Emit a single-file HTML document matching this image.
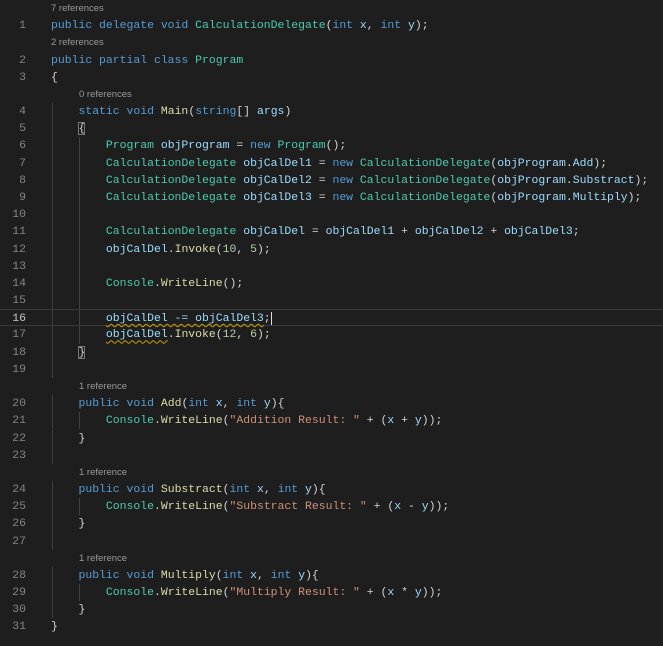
<!DOCTYPE html><html><head><style>
body{margin:0;background:#1e1e1e;width:663px;height:646px;overflow:hidden;position:relative}
.r{position:absolute;left:0;width:663px;height:17.18px;line-height:17.18px;white-space:pre;font-family:"Liberation Mono",monospace;font-size:11.45px;color:#d4d4d4}
.n{position:absolute;right:637px;color:#858585;text-align:right}
.c{position:absolute;left:51px}
.ref{font-family:"Liberation Sans",sans-serif;font-size:9.5px;color:#999}
.g{position:absolute;top:0;bottom:0;width:1px;background:#404040}
.k{color:#569cd6}.t{color:#4ec9b0}.m{color:#dcdcaa}.v{color:#9cdcfe}.s{color:#ce9178}.nu{color:#b5cea8}
.w{text-decoration:underline wavy #c9a000;text-decoration-thickness:1px;text-underline-offset:2px}
.cur{border-top:1px solid #3a3a3a;border-bottom:1px solid #3a3a3a;box-sizing:border-box}
.br{outline:1px solid #777;outline-offset:-1px}
</style></head><body>
<div class="r" style="top:0"><span class="c ref">7 references</span></div>
<div class="r" style="top:17.18px"><span class="n">1</span><span class="c"><span class="k">public delegate void</span> <span class="t">CalculationDelegate</span>(<span class="k">int</span> <span class="v">x</span>, <span class="k">int</span> <span class="v">y</span>);</span></div>
<div class="r" style="top:34.36px"><span class="c ref">2 references</span></div>
<div class="r" style="top:51.54px"><span class="n">2</span><span class="c"><span class="k">public partial class</span> <span class="t">Program</span></span></div>
<div class="r" style="top:68.72px"><span class="n">3</span><span class="c">{</span></div>
<div class="r" style="top:85.9px"><span class="c ref" style="left:79px">0 references</span></div>
<div class="r" style="top:103.08px"><span class="g" style="left:52px"></span><span class="n">4</span><span class="c">    <span class="k">static void</span> <span class="m">Main</span>(<span class="k">string</span>[] <span class="v">args</span>)</span></div>
<div class="r" style="top:120.26px"><span class="g" style="left:52px"></span><span class="n">5</span><span class="c">    <span class="br">{</span></span></div>
<div class="r" style="top:137.44px"><span class="g" style="left:52px"></span><span class="g" style="left:79px"></span><span class="n">6</span><span class="c">        <span class="t">Program</span> <span class="v">objProgram</span> = <span class="k">new</span> <span class="t">Program</span>();</span></div>
<div class="r" style="top:154.62px"><span class="g" style="left:52px"></span><span class="g" style="left:79px"></span><span class="n">7</span><span class="c">        <span class="t">CalculationDelegate</span> <span class="v">objCalDel1</span> = <span class="k">new</span> <span class="t">CalculationDelegate</span>(<span class="v">objProgram</span>.<span class="v">Add</span>);</span></div>
<div class="r" style="top:171.8px"><span class="g" style="left:52px"></span><span class="g" style="left:79px"></span><span class="n">8</span><span class="c">        <span class="t">CalculationDelegate</span> <span class="v">objCalDel2</span> = <span class="k">new</span> <span class="t">CalculationDelegate</span>(<span class="v">objProgram</span>.<span class="v">Substract</span>);</span></div>
<div class="r" style="top:188.98px"><span class="g" style="left:52px"></span><span class="g" style="left:79px"></span><span class="n">9</span><span class="c">        <span class="t">CalculationDelegate</span> <span class="v">objCalDel3</span> = <span class="k">new</span> <span class="t">CalculationDelegate</span>(<span class="v">objProgram</span>.<span class="v">Multiply</span>);</span></div>
<div class="r" style="top:206.16px"><span class="g" style="left:52px"></span><span class="g" style="left:79px"></span><span class="n">10</span></div>
<div class="r" style="top:223.34px"><span class="g" style="left:52px"></span><span class="g" style="left:79px"></span><span class="n">11</span><span class="c">        <span class="t">CalculationDelegate</span> <span class="v">objCalDel</span> = <span class="v">objCalDel1</span> + <span class="v">objCalDel2</span> + <span class="v">objCalDel3</span>;</span></div>
<div class="r" style="top:240.52px"><span class="g" style="left:52px"></span><span class="g" style="left:79px"></span><span class="n">12</span><span class="c">        <span class="v">objCalDel</span>.<span class="m">Invoke</span>(<span class="nu">10</span>, <span class="nu">5</span>);</span></div>
<div class="r" style="top:257.7px"><span class="g" style="left:52px"></span><span class="g" style="left:79px"></span><span class="n">13</span></div>
<div class="r" style="top:274.88px"><span class="g" style="left:52px"></span><span class="g" style="left:79px"></span><span class="n">14</span><span class="c">        <span class="t">Console</span>.<span class="m">WriteLine</span>();</span></div>
<div class="r" style="top:292.06px"><span class="g" style="left:52px"></span><span class="g" style="left:79px"></span><span class="n">15</span></div>
<div class="r cur" style="top:309.24px"><span class="g" style="left:52px"></span><span class="g" style="left:79px"></span><span class="n" style="color:#c6c6c6">16</span><span class="c">        <span class="v w">objCalDel -= objCalDel3</span>;<span style="border-left:1px solid #ddd"></span></span></div>
<div class="r" style="top:326.42px"><span class="g" style="left:52px"></span><span class="g" style="left:79px"></span><span class="n">17</span><span class="c">        <span class="v w">objCalDel</span>.<span class="m">Invoke</span>(<span class="nu">12</span>, <span class="nu">6</span>);</span></div>
<div class="r" style="top:343.6px"><span class="g" style="left:52px"></span><span class="n">18</span><span class="c">    <span class="br">}</span></span></div>
<div class="r" style="top:360.78px"><span class="g" style="left:52px"></span><span class="n">19</span></div>
<div class="r" style="top:377.96px"><span class="c ref" style="left:79px">1 reference</span></div>
<div class="r" style="top:395.14px"><span class="g" style="left:52px"></span><span class="n">20</span><span class="c">    <span class="k">public void</span> <span class="m">Add</span>(<span class="k">int</span> <span class="v">x</span>, <span class="k">int</span> <span class="v">y</span>){</span></div>
<div class="r" style="top:412.32px"><span class="g" style="left:52px"></span><span class="g" style="left:79px"></span><span class="n">21</span><span class="c">        <span class="t">Console</span>.<span class="m">WriteLine</span>(<span class="s">"Addition Result: "</span> + (<span class="v">x</span> + <span class="v">y</span>));</span></div>
<div class="r" style="top:429.5px"><span class="g" style="left:52px"></span><span class="n">22</span><span class="c">    }</span></div>
<div class="r" style="top:446.68px"><span class="g" style="left:52px"></span><span class="n">23</span></div>
<div class="r" style="top:463.86px"><span class="c ref" style="left:79px">1 reference</span></div>
<div class="r" style="top:481.04px"><span class="g" style="left:52px"></span><span class="n">24</span><span class="c">    <span class="k">public void</span> <span class="m">Substract</span>(<span class="k">int</span> <span class="v">x</span>, <span class="k">int</span> <span class="v">y</span>){</span></div>
<div class="r" style="top:498.22px"><span class="g" style="left:52px"></span><span class="g" style="left:79px"></span><span class="n">25</span><span class="c">        <span class="t">Console</span>.<span class="m">WriteLine</span>(<span class="s">"Substract Result: "</span> + (<span class="v">x</span> - <span class="v">y</span>));</span></div>
<div class="r" style="top:515.4px"><span class="g" style="left:52px"></span><span class="n">26</span><span class="c">    }</span></div>
<div class="r" style="top:532.58px"><span class="g" style="left:52px"></span><span class="n">27</span></div>
<div class="r" style="top:549.76px"><span class="c ref" style="left:79px">1 reference</span></div>
<div class="r" style="top:566.94px"><span class="g" style="left:52px"></span><span class="n">28</span><span class="c">    <span class="k">public void</span> <span class="m">Multiply</span>(<span class="k">int</span> <span class="v">x</span>, <span class="k">int</span> <span class="v">y</span>){</span></div>
<div class="r" style="top:584.12px"><span class="g" style="left:52px"></span><span class="g" style="left:79px"></span><span class="n">29</span><span class="c">        <span class="t">Console</span>.<span class="m">WriteLine</span>(<span class="s">"Multiply Result: "</span> + (<span class="v">x</span> * <span class="v">y</span>));</span></div>
<div class="r" style="top:601.3px"><span class="g" style="left:52px"></span><span class="n">30</span><span class="c">    }</span></div>
<div class="r" style="top:618.48px"><span class="n">31</span><span class="c">}</span></div>
</body></html>
